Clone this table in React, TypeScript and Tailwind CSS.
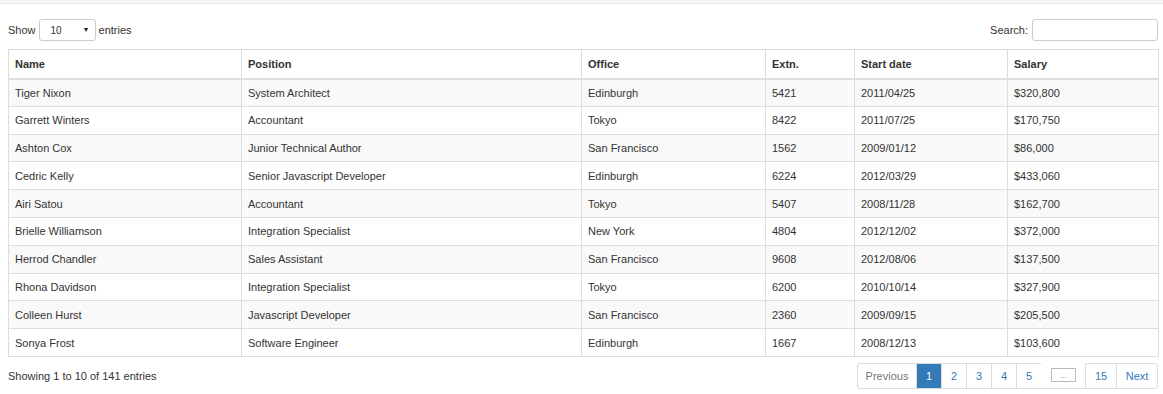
import React from 'react';

type Row = [string, string, string, string, string, string];

const rows: Row[] = [
  ['Tiger Nixon', 'System Architect', 'Edinburgh', '5421', '2011/04/25', '$320,800'],
  ['Garrett Winters', 'Accountant', 'Tokyo', '8422', '2011/07/25', '$170,750'],
  ['Ashton Cox', 'Junior Technical Author', 'San Francisco', '1562', '2009/01/12', '$86,000'],
  ['Cedric Kelly', 'Senior Javascript Developer', 'Edinburgh', '6224', '2012/03/29', '$433,060'],
  ['Airi Satou', 'Accountant', 'Tokyo', '5407', '2008/11/28', '$162,700'],
  ['Brielle Williamson', 'Integration Specialist', 'New York', '4804', '2012/12/02', '$372,000'],
  ['Herrod Chandler', 'Sales Assistant', 'San Francisco', '9608', '2012/08/06', '$137,500'],
  ['Rhona Davidson', 'Integration Specialist', 'Tokyo', '6200', '2010/10/14', '$327,900'],
  ['Colleen Hurst', 'Javascript Developer', 'San Francisco', '2360', '2009/09/15', '$205,500'],
  ['Sonya Frost', 'Software Engineer', 'Edinburgh', '1667', '2008/12/13', '$103,600'],
];

const columns = [
  { label: 'Name', w: 'w-[233px]' },
  { label: 'Position', w: 'w-[340px]' },
  { label: 'Office', w: 'w-[184px]' },
  { label: 'Extn.', w: 'w-[89px]' },
  { label: 'Start date', w: 'w-[153px]' },
  { label: 'Salary', w: 'w-[151px]' },
];

const PageBtn: React.FC<{ label: string; active?: boolean; disabled?: boolean; w: string; first?: boolean; last?: boolean }> = ({
  label,
  active,
  disabled,
  w,
  first,
  last,
}) => (
  <div
    className={`h-[26px] ${w} flex items-center justify-center border border-[#ddd] -ml-px ${
      first ? 'rounded-l-[3px] ml-0' : ''
    } ${last ? 'rounded-r-[3px]' : ''} ${
      active ? 'bg-[#337ab7] border-[#337ab7] text-white relative z-10' : disabled ? 'text-[#777] bg-white' : 'text-[#337ab7] bg-white'
    }`}
  >
    {label}
  </div>
);

export default function App() {
  return (
    <div className="w-[1163px] h-[394px] bg-white text-[#333] text-[11px] overflow-hidden" style={{ fontFamily: '"Liberation Sans", Arial, sans-serif' }}>
      {/* top strip */}
      <div className="h-[4px] bg-[#f5f5f5] border-b border-[#e7e7e7]" />

      <div className="pl-[8px] pr-[5px]">
        {/* controls */}
        <div className="flex items-center justify-between mt-[15px] h-[22px]">
          <div className="flex items-center gap-[3px]">
            <span>Show</span>
            <div className="w-[57px] h-[22px] border border-[#ccc] rounded-[3px] flex items-center justify-between pl-[11px] pr-[5px] text-[10px]">
              <span>10</span>
              <span className="text-[7px] text-[#222]">▼</span>
            </div>
            <span>entries</span>
          </div>
          <div className="flex items-center gap-[4px]">
            <span>Search:</span>
            <div className="w-[126px] h-[22px] border border-[#ccc] rounded-[3px]" />
          </div>
        </div>

        {/* table */}
        <table className="mt-[8px] w-[1150px] border-collapse border border-[#ddd] table-fixed">
          <thead>
            <tr>
              {columns.map((c) => (
                <th
                  key={c.label}
                  className={`${c.w} text-left font-bold border border-[#ddd] border-b-2 px-[6px] h-[29px] leading-[14px]`}
                >
                  {c.label}
                </th>
              ))}
            </tr>
          </thead>
          <tbody>
            {rows.map((r, i) => (
              <tr key={r[0]} className={i % 2 === 0 ? 'bg-[#f9f9f9]' : 'bg-white'}>
                {r.map((cell, j) => (
                  <td key={j} className="border border-[#ddd] px-[6px] h-[27.8px] leading-[14px]">
                    {cell}
                  </td>
                ))}
              </tr>
            ))}
          </tbody>
        </table>

        {/* footer */}
        <div className="flex items-center justify-between mt-[6px]">
          <span>Showing 1 to 10 of 141 entries</span>
          <div className="flex items-center">
            <PageBtn label="Previous" disabled first w="w-[60px]" />
            <PageBtn label="1" active w="w-[26px]" />
            <PageBtn label="2" w="w-[26px]" />
            <PageBtn label="3" w="w-[26px]" />
            <PageBtn label="4" w="w-[26px]" />
            <PageBtn label="5" w="w-[26px]" />
            <div className="h-[26px] w-[45px] -ml-px border-b border-[#ddd] flex items-center justify-center bg-white">
              <div className="w-[25px] h-[14px] border border-[#bbb] flex items-center justify-center text-[9px] text-[#999] leading-none">
                ...
              </div>
            </div>
            <PageBtn label="15" w="w-[32px]" />
            <PageBtn label="Next" last w="w-[42px]" />
          </div>
        </div>
      </div>
    </div>
  );
}
